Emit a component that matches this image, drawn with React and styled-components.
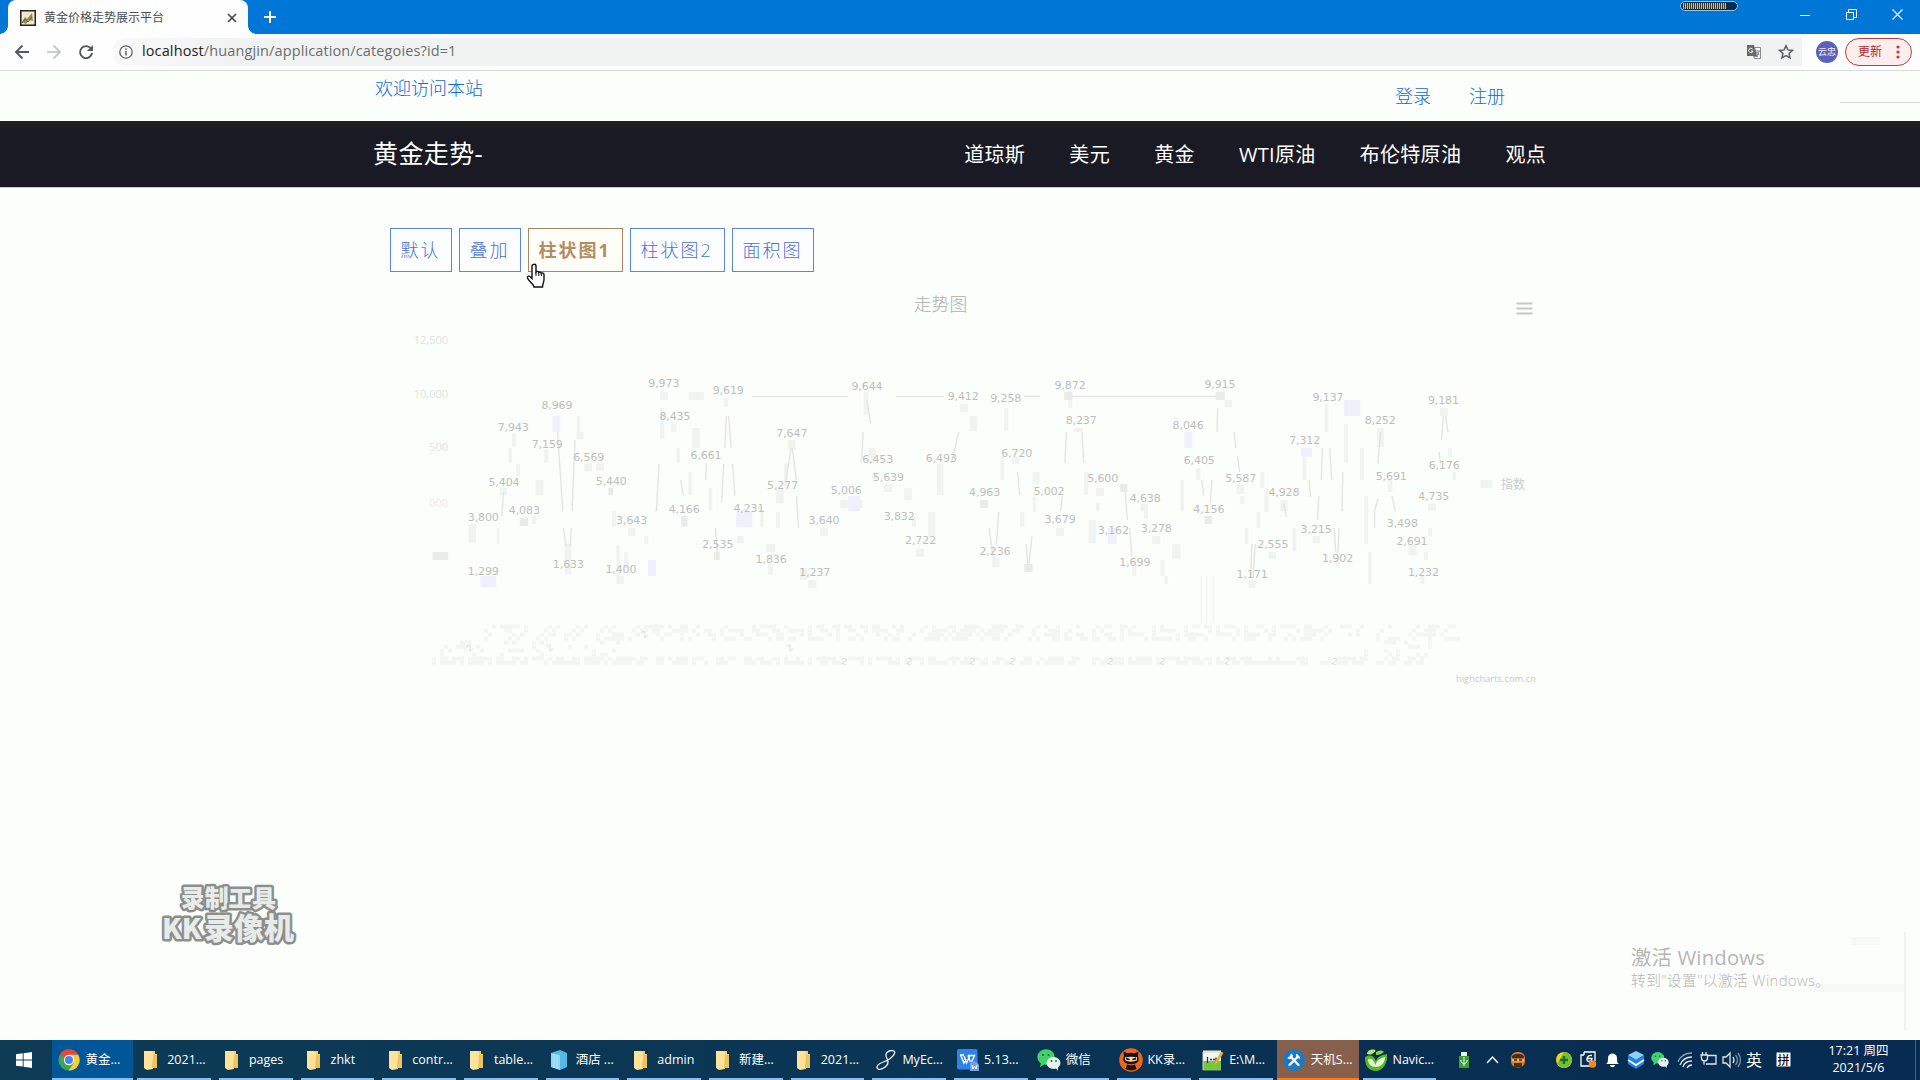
import React from "react";
import styled, { createGlobalStyle } from "styled-components";

const CJK = '"Noto Sans CJK SC"';

const GlobalStyle = createGlobalStyle`
  * { box-sizing: border-box; }
  body { margin: 0; background: #fcfefb; overflow: hidden; }
`;

const Screen = styled.div`
  width: 1920px;
  height: 1080px;
  position: relative;
  display: flex;
  flex-direction: column;
  background: #fcfefb;
  font-family: "Open Sans", ${CJK}, sans-serif;
  overflow: hidden;
  white-space: nowrap;
  line-height: 1;
  svg { display: block; flex: none; }
`;

/* ---------- browser chrome ---------- */
const TabBar = styled.header`
  height: 34px;
  flex: none;
  display: flex;
  align-items: center;
  background: #0077d7;
  padding-left: 8px;
`;
const Tab = styled.div`
  width: 240px;
  height: 34px;
  padding: 1px 10px 0 12px;
  display: flex;
  align-items: center;
  gap: 8px;
  border-radius: 8px 8px 0 0;
  background: #fdfefd;
  position: relative;
  &::before, &::after {
    content: "";
    position: absolute;
    bottom: 0;
    width: 8px;
    height: 8px;
  }
  &::before { left: -8px; background: radial-gradient(circle at 0 0, transparent 7.5px, #fdfefd 8px); }
  &::after { right: -8px; background: radial-gradient(circle at 100% 0, transparent 7.5px, #fdfefd 8px); }
`;
const TabTitle = styled.span`
  flex: 1;
  font-size: 12px;
  color: #4a4d4e;
`;
const NewTab = styled.div`margin-left: 15px;`;
const Spacer = styled.div`flex: 1;`;
const Meter = styled.div`
  width: 58px;
  height: 10px;
  align-self: flex-start;
  margin: 1px 62px 0 0;
  border: 1px solid #8cc4ea;
  border-radius: 5px;
  background: #062c50;
  padding: 1px 11px 1px 2px;
`;
const MeterFill = styled.div`
  height: 6px;
  background: repeating-linear-gradient(90deg, #d9b960 0 1px, #3d3c2c 1px 2px);
`;
const WindowButtons = styled.div`
  display: flex;
  gap: 35px;
  padding: 0 17px 6px 0;
`;
const Toolbar = styled.div`
  height: 37px;
  flex: none;
  display: flex;
  align-items: center;
  padding: 0 8px 1px 14px;
  border-bottom: 1px solid #d9dbda;
  background: #fdfefd;
`;
const NavIcons = styled.div`
  display: flex;
  gap: 16px;
  margin-right: 18px;
`;
const Omnibox = styled.div`
  flex: 1;
  height: 28px;
  display: flex;
  align-items: center;
  border-radius: 14px 0 0 14px;
  background: linear-gradient(90deg, #f8f9f8, #f1f3f2 120px);
  padding: 0 8px 0 7px;
`;
const Url = styled.span`
  flex: 1;
  margin-left: 9px;
  font-size: 14.5px;
  letter-spacing: 0.12px;
  color: #6a6e70;
  b { font-weight: 400; color: #222426; }
`;
const Avatar = styled.div`
  width: 22px;
  height: 22px;
  margin: 0 7px 0 14px;
  border-radius: 50%;
  background: #5c62bb;
  color: #eef0ff;
  font-size: 9px;
  display: flex;
  align-items: center;
  justify-content: center;
`;
const UpdatePill = styled.div`
  width: 67px;
  height: 28px;
  border: 1px solid #c23a3c;
  border-radius: 14px;
  background: #fbeeed;
  color: #b3262b;
  font-size: 12px;
  display: flex;
  align-items: center;
  justify-content: space-between;
  padding: 0 11px 0 12px;
`;

/* ---------- site ---------- */
const Page = styled.main`
  flex: 1;
  min-height: 0;
  display: flex;
  flex-direction: column;
`;
const TopLinks = styled.div`
  height: 50px;
  flex: none;
  display: flex;
  justify-content: space-between;
  padding: 8px 415px 0 375px;
  color: #0f6bd8;
  font-size: 18px;
  font-weight: 300;
  position: relative;
  &::after {
    content: "";
    position: absolute;
    left: 1840px;
    right: 0;
    top: 31px;
    height: 1px;
    background: #d8dad9;
  }
`;
const Account = styled.div`
  display: flex;
  gap: 38px;
  padding-top: 8px;
`;
const SiteNav = styled.nav`
  height: 67px;
  flex: none;
  display: flex;
  align-items: center;
  justify-content: space-between;
  padding: 0 374px 0 373px;
  background: linear-gradient(180deg, #1f1f1f 0 7px, #191a24 7px 55px, #1d1822 66px);
  border-bottom: 1px solid #cfcdd2;
  color: #fff;
`;
const Brand = styled.div`
  font-size: 25px;
  letter-spacing: 0.4px;
  padding-bottom: 2px;
`;
const Menu = styled.div`
  display: flex;
  gap: 44.2px;
  font-size: 20px;
  letter-spacing: 0.3px;
  padding-top: 2px;
`;
const Content = styled.section`
  padding: 40px 0 0 390px;
`;
const ButtonRow = styled.div`
  display: flex;
  gap: 7px;
`;
const ChartButton = styled.button`
  height: 44px;
  width: ${(p) => p.$w}px;
  padding: 0 0 2px 9.5px;
  text-align: left;
  border: 1px solid ${(p) => (p.$hot ? "#a88567" : "#5c84e6")};
  background: ${(p) => (p.$hot ? "#fffdf8" : "#fbfdfe")};
  color: ${(p) => (p.$hot ? "#b28d62" : "#4a70d8")};
  font: ${(p) => (p.$hot ? 700 : 300)} 18px "Open Sans", ${CJK}, sans-serif;
  letter-spacing: 2px;
`;
const ChartBox = styled.div`
  margin: 18px 0 0 10px;
`;

/* ---------- overlays ---------- */
const Cursor = styled.div`
  position: absolute;
  left: 526px;
  top: 263px;
`;
const RecorderMark = styled.div`
  position: absolute;
  left: 150px;
  top: 862px;
`;
const Activation = styled.div`
  position: absolute;
  left: 1631px;
  top: 946px;
  color: #b4b6b4;
  font-weight: 300;
  h4 { margin: 0 0 4px; font-size: 20.3px; line-height: 22px; font-weight: 400; letter-spacing: 0.2px; }
  p { margin: 0; font-size: 14.8px; line-height: 16px; letter-spacing: 0.35px; }
`;
const Ghost = styled.div`
  position: absolute;
  left: 1808px;
  top: 932px;
  width: 98px;
  height: 98px;
  border-right: 2px solid #f0f2ef;
  background: linear-gradient(#f7f9f6, #f7f9f6) 44px 5px / 28px 8px no-repeat,
    linear-gradient(#f7f9f6, #f7f9f6) 0 52px / 98px 8px no-repeat;
`;

/* ---------- taskbar ---------- */
const Taskbar = styled.footer`
  height: 40px;
  flex: none;
  display: flex;
  background: linear-gradient(90deg, #0d3b54, #0a3554 45%, #062a50);
  color: #fff;
  font-size: 12.5px;
`;
const Start = styled.div`
  width: 51.5px;
  padding: 12px 0 0 16px;
`;
const Task = styled.div`
  width: 81.7px;
  height: 40px;
  flex: none;
  position: relative;
  display: flex;
  align-items: center;
  gap: 5.5px;
  padding-left: 6.5px;
  background: ${(p) => p.$bg || "transparent"};
  &::after {
    content: "";
    position: absolute;
    bottom: 0;
    height: 2px;
    left: ${(p) => (p.$bg ? 0 : 4)}px;
    right: ${(p) => (p.$bg ? 0 : 4)}px;
    background: ${(p) => p.$line || "#86bfef"};
  }
`;
const TaskIcon = styled.span`
  width: 22px;
  display: flex;
  justify-content: center;
`;
const Tray = styled.div`
  flex: 1;
  position: relative;
  > svg { position: absolute; right: 0; top: 0; }
`;

/* ---------- icons ---------- */
const I = ({ w = 16, h = w, vb, children, ...p }) => (
  <svg width={w} height={h} viewBox={vb || `0 0 ${w} ${h}`} fill="none" {...p}>{children}</svg>
);

const Folder = () => (
  <I w={14} h={20}>
    <path d="M0 1h11v3h2v14H0z" fill="#f5cf68" />
    <path d="M0 1h8l1 2v16l-6 1-3-2z" fill="#ffe39a" />
    <path d="M9 5h4v13H8z" fill="#eec35c" />
  </I>
);
const Chrome = () => (
  <I w={22} vb="0 0 24 24">
    <circle cx="12" cy="12" r="11.5" fill="#3fa551" />
    <path d="M12 12 2 6.2A11.5 11.5 0 0 1 22 6.2z" fill="#e3493b" />
    <path d="M22 6.2H12l5.2 9L11.6 23.5A11.5 11.5 0 0 0 22 6.2z" fill="#f9cd3a" />
    <circle cx="12" cy="12" r="5.6" fill="#fff" />
    <circle cx="12" cy="12" r="4.4" fill="#4a86e8" />
  </I>
);
const Crate = () => (
  <I w={18} h={20}>
    <path d="m1 3 9-3 7 3v14l-7 3-9-3z" fill="#58b8e4" />
    <path d="m1 3 9 2v15l-9-3z" fill="#8fd8f5" />
    <path d="M4 4v14M7 5v14" stroke="#c7effc" strokeWidth=".7" />
  </I>
);
const Eclipse = () => (
  <I w={22} h={22}>
    <path d="M19.500 4.500C21 1 15 .5 12 3.500c-3 3.200.5 5.500 1 9 .4 4-5 8.300-9 7.800-3.300-.5-2.300-4 1-5.800C8.500 12.500 17 11 19.500 4.500z" stroke="#e8f1f5" strokeWidth="1.300" />
  </I>
);
const Wps = () => (
  <I w={22}>
    <rect width="20.500" height="20.500" rx="2" fill="#2f82ea" />
    <path d="M3 6h4m0 1 2.500 7L13 6.500m-2 0h6.500l-3.500 8-3-8M3.800 6.500 7 14l2-4" stroke="#fff" strokeWidth="1.400" />
    <path d="M13 12.500h6l3 3V22h-9z" fill="#6f9fe8" />
    <path d="m15 16 1 4 1.500-3 1.500 3 1-4" stroke="#fff" />
  </I>
);
const WeChat = ({ w = 24 }) => (
  <I w={w} vb="0 0 24 24">
    <ellipse cx="9" cy="9" rx="8.700" ry="7.700" fill="#43d16c" />
    <path d="m4 14-1 5 5-3z" fill="#43d16c" />
    <ellipse cx="16.500" cy="15" rx="7" ry="6" fill="#e7f2ee" />
    <path d="m18 19 3 4v-5z" fill="#e7f2ee" />
    <g fill="#15633b"><circle cx="6" cy="7" r="1" /><circle cx="11.500" cy="7" r="1" /><circle cx="14.500" cy="13" r=".9" /><circle cx="19" cy="13" r=".9" /></g>
  </I>
);
const Ninja = ({ w = 24 }) => (
  <I w={w} vb="0 0 24 24">
    <circle cx="12" cy="12" r="11.800" fill="#f0641c" />
    <path d="m4.500 3.500 4 1.700c2-.7 5-.7 7 0l4-1.700-.5 5c1 2 1 4-.3 5.500-3 3-10.400 3-13.400 0C4 12.500 4 10.500 5 8.500z" fill="#171313" />
    <path d="M6 9.300c4-.8 8-.8 12 0v3c-3 1.800-9 1.800-12 0z" fill="#f3d3ae" />
    <path d="m7 9.500 4 1.500-1 1.300-3-.8zm10 0L13 11l1 1.300 3-.8z" fill="#111" />
    <path d="m8 16.500 4 1 4-1 1.500 4.500c-3 1.800-8 1.800-11 0z" fill="#171313" />
  </I>
);
const Notepad = () => (
  <I w={22}>
    <path d="M1 1.500h18V21H1z" fill="#f4f6f1" />
    <path d="M1 12h18v9.500H1z" fill="#79c542" />
    <path d="M1 21V3h17" stroke="#cfd5c6" />
    <path d="M2 1.500h16" stroke="#7c8078" strokeDasharray="1.500 1" />
    <path d="M5.500 8v6m2.500-3.500h2m1 0h2m1-2v4" stroke="#333" strokeWidth="1.300" />
    <path d="M19 2.500 13.500 12l-1 4 3-2.500L21.500 4z" fill="#e4b239" />
  </I>
);
const Wrench = () => (
  <I w={22}>
    <circle cx="11" cy="11" r="10.800" fill="#1d79c4" />
    <path d="m7.500 7.500 8 8.500M15 7.500 6.500 16" stroke="#fff" strokeWidth="2.300" strokeLinecap="round" />
    <path d="M5 8.500q3 2 4-1.500L8 5M14 5q-1 4 3 3.500" stroke="#fff" strokeWidth="1.800" />
  </I>
);
const Navicat = () => (
  <I w={24} h={22}>
    <path d="M1 9c0-2 4-3 7-2 2 .5 3 3 4 5 2-5 6-6 11-7 1 9-4 17-11 17S1 17 1 9z" fill="#55b52d" />
    <path d="M4 10c4-1 6 2 7.500 6C13 11 16 9 21 8c0 6-4 10-9 10s-8-3-8-8z" fill="#e8f8d2" />
    <path d="M3 5c0-3 3-5 7-4.500 2 .5 2 2 0 3-2 1.500-3 3-7 1.500z" fill="#b6e668" />
    <path d="M12 3c3-2 6-2 8 0-2 2-5 3-8 3z" fill="#8bd23f" />
  </I>
);

const TASKS = [
  ["黄金...", Chrome, "#005697"],
  ["2021...", Folder], ["pages", Folder], ["zhkt", Folder], ["contr...", Folder],
  ["table...", Folder], ["酒店 ...", Crate], ["admin", Folder], ["新建...", Folder],
  ["2021...", Folder], ["MyEc...", Eclipse], ["5.13...", Wps], ["微信", WeChat],
  ["KK录...", Ninja], ["E:\\M...", Notepad], ["天机S...", Wrench, "#87604c", "#ff7a17"],
  ["Navic...", Navicat],
];

/* ---------- chart ---------- */
const SX = 0.37;
const SY = 1 / 3;
const HALF = 1568;

const LABELS = [
  ["1,299", 225, 843], ["3,800", 225, 681], ["5,404", 281, 575], ["7,943", 306, 411], ["4,083", 336, 660],
  ["7,159", 398, 462], ["8,969", 424, 345], ["1,633", 455, 822], ["6,569", 510, 501], ["5,440", 571, 573],
  ["1,400", 597, 836], ["3,643", 626, 690], ["9,973", 713, 280], ["8,435", 743, 379], ["4,166", 768, 657],
  ["6,661", 827, 496], ["2,535", 859, 763], ["9,619", 887, 300], ["4,231", 943, 653], ["1,836", 1003, 807],
  ["5,277", 1034, 585], ["7,647", 1059, 429], ["1,237", 1121, 847], ["3,640", 1146, 690], ["5,006", 1206, 600],
  ["9,644", 1262, 287], ["6,453", 1291, 508], ["5,639", 1320, 561], ["3,832", 1349, 679], ["2,722", 1407, 750],
  ["6,493", 1463, 504], ["9,412", 1522, 317], ["4,963", 1580, 605],
  ["2,236", HALF + 40, 783], ["9,258", HALF + 69, 323], ["6,720", HALF + 99, 489], ["5,002", HALF + 186, 604],
  ["3,679", HALF + 216, 688], ["9,872", HALF + 243, 285], ["8,237", HALF + 273, 390], ["5,600", HALF + 331, 563],
  ["3,162", HALF + 360, 720], ["1,699", HALF + 418, 815], ["4,638", HALF + 446, 625], ["3,278", HALF + 476, 714],
  ["8,046", HALF + 562, 405], ["6,405", HALF + 592, 511], ["4,156", HALF + 618, 657], ["9,915", HALF + 648, 283],
  ["5,587", HALF + 704, 563], ["1,171", HALF + 735, 852], ["2,555", HALF + 791, 763], ["4,928", HALF + 821, 605],
  ["7,312", HALF + 877, 450], ["3,215", HALF + 908, 717], ["9,137", HALF + 940, 320], ["1,902", HALF + 966, 803],
  ["8,252", HALF + 1081, 390], ["5,691", HALF + 1111, 558], ["3,498", HALF + 1141, 699], ["2,691", HALF + 1167, 752],
  ["1,232", HALF + 1198, 846], ["4,735", HALF + 1226, 619], ["9,181", HALF + 1252, 331], ["6,176", HALF + 1254, 525],
];

/* marker remnants: x, y, width, height, shade */
const BLOCKS = [
  [217, 858, 43, 34, "b"], [270, 592, 20, 24], [303, 428, 10, 44], [324, 684, 22, 24, "d"], [390, 476, 11, 42],
  [412, 378, 21, 48, "b"], [477, 378, 10, 70], [487, 426, 9, 22], [445, 762, 18, 90], [498, 520, 21, 24],
  [530, 520, 21, 24], [563, 594, 13, 22, "d"], [585, 858, 20, 24], [616, 714, 20, 24], [703, 306, 21, 24],
  [780, 306, 41, 24], [703, 354, 11, 94], [733, 402, 14, 24], [747, 474, 10, 46], [790, 414, 20, 60],
  [670, 810, 22, 48, "b"], [760, 678, 17, 32, "d"], [780, 546, 9, 70], [834, 594, 10, 68], [849, 786, 15, 24, "d"],
  [876, 324, 10, 28], [908, 666, 44, 46, "b"], [930, 678, 18, 24], [974, 660, 9, 52], [995, 822, 13, 32],
  [1016, 592, 21, 48], [1016, 666, 11, 48], [1038, 520, 10, 74], [1048, 450, 21, 30], [1081, 834, 20, 35],
  [1103, 870, 22, 24], [1135, 714, 22, 24], [1190, 630, 60, 24], [1211, 618, 33, 46, "b"], [1253, 306, 13, 70],
  [1266, 474, 20, 46], [1276, 546, 12, 22], [1308, 582, 22, 24], [1363, 594, 21, 36], [1395, 776, 21, 24],
  [1384, 680, 10, 32], [1427, 666, 20, 72], [1451, 522, 18, 94], [1514, 342, 21, 24], [1540, 378, 20, 46],
  [573, 664, 10, 48], [585, 764, 9, 95], [606, 786, 10, 48], [660, 738, 11, 24], [261, 714, 8, 48],
  [185, 702, 20, 58], [293, 474, 10, 46], [314, 522, 10, 36], [366, 570, 22, 46], [357, 678, 11, 24],
  [88, 786, 42, 24, "d"], [911, 738, 18, 22], [990, 762, 24, 24],
  [HALF + 0, 630, 21, 24, "d"], [HALF + 32, 800, 20, 32], [HALF + 65, 354, 11, 70], [HALF + 55, 500, 10, 70],
  [HALF + 86, 500, 20, 22], [HALF + 142, 546, 19, 36], [HALF + 108, 666, 11, 46], [HALF + 119, 822, 22, 24, "d"],
  [HALF + 142, 620, 9, 46], [HALF + 205, 714, 22, 24], [HALF + 227, 306, 22, 24, "d"], [HALF + 238, 330, 11, 24],
  [HALF + 255, 414, 22, 12], [HALF + 313, 594, 22, 24], [HALF + 281, 546, 10, 70], [HALF + 313, 640, 10, 25],
  [HALF + 378, 582, 20, 24, "d"], [HALF + 293, 690, 20, 70], [HALF + 345, 714, 24, 48, "b"], [HALF + 411, 810, 11, 48],
  [HALF + 433, 642, 21, 22], [HALF + 443, 664, 11, 24], [HALF + 465, 738, 22, 24], [HALF + 498, 858, 10, 24],
  [HALF + 487, 810, 10, 48], [HALF + 519, 762, 22, 46], [HALF + 541, 570, 10, 95], [HALF + 552, 426, 21, 48, "b"],
  [HALF + 584, 534, 11, 36], [HALF + 606, 678, 21, 24, "d"], [HALF + 637, 306, 24, 24, "d"], [HALF + 661, 330, 20, 22],
  [HALF + 692, 582, 22, 30], [HALF + 703, 618, 11, 24], [HALF + 715, 714, 10, 48], [HALF + 725, 870, 20, 24],
  [HALF + 757, 546, 11, 48], [HALF + 768, 594, 11, 72], [HALF + 747, 666, 10, 48], [HALF + 779, 786, 20, 22],
  [HALF + 811, 630, 20, 34], [HALF + 844, 714, 11, 70], [HALF + 867, 474, 30, 26, "b"], [HALF + 871, 500, 11, 70],
  [HALF + 898, 738, 20, 22], [HALF + 931, 342, 10, 84], [HALF + 984, 330, 43, 48, "b"], [HALF + 984, 402, 10, 118],
  [HALF + 962, 786, 10, 46], [HALF + 1027, 474, 10, 96], [HALF + 1038, 618, 10, 144], [HALF + 1048, 786, 10, 96],
  [HALF + 1073, 414, 18, 58], [HALF + 1102, 570, 12, 36], [HALF + 1157, 762, 22, 34], [HALF + 1200, 786, 10, 24],
  [HALF + 1190, 858, 10, 24], [HALF + 1211, 640, 21, 24], [HALF + 1211, 714, 10, 24], [HALF + 1243, 354, 21, 24],
  [HALF + 1277, 546, 9, 24], [HALF + 1265, 474, 10, 28], [HALF + 1352, 570, 32, 24],
];

const LINES = [
  [426, 426, 440, 664], [473, 450, 465, 664], [442, 714, 449, 770], [463, 714, 460, 770], [700, 522, 693, 664],
  [759, 570, 766, 616], [882, 378, 878, 474], [888, 378, 895, 474], [875, 522, 869, 640], [899, 522, 905, 616],
  [853, 714, 857, 786], [1057, 474, 1043, 570], [1060, 474, 1071, 570], [1072, 618, 1077, 714], [1252, 426, 1247, 520],
  [1262, 330, 1272, 400], [1510, 426, 1500, 474], [1500, 474, 1490, 520], [280, 606, 275, 678], [828, 520, 826, 570],
  [952, 320, 1211, 320], [1340, 320, 1470, 320], [HALF + 119, 319, HALF + 162, 319], [HALF + 248, 319, HALF + 638, 319],
  [HALF + 24, 714, HALF + 35, 800], [HALF + 50, 666, HALF + 44, 762], [HALF + 101, 546, HALF + 107, 616],
  [HALF + 124, 762, HALF + 129, 822], [HALF + 140, 738, HALF + 132, 820], [HALF + 233, 426, HALF + 229, 520],
  [HALF + 275, 426, HALF + 280, 520], [HALF + 222, 618, HALF + 217, 664], [HALF + 392, 606, HALF + 398, 690],
  [HALF + 404, 714, HALF + 410, 800], [HALF + 642, 354, HALF + 640, 426], [HALF + 686, 426, HALF + 691, 474],
  [HALF + 696, 500, HALF + 701, 546], [HALF + 599, 570, HALF + 604, 616], [HALF + 626, 570, HALF + 622, 640],
  [HALF + 735, 762, HALF + 730, 864], [HALF + 743, 762, HALF + 738, 864], [HALF + 925, 474, HALF + 922, 570],
  [HALF + 945, 474, HALF + 950, 570], [HALF + 889, 570, HALF + 893, 620], [HALF + 915, 618, HALF + 912, 690],
  [HALF + 980, 546, HALF + 978, 664], [HALF + 957, 714, HALF + 961, 786], [HALF + 970, 714, HALF + 967, 786],
  [HALF + 1082, 426, HALF + 1075, 520], [HALF + 1075, 626, HALF + 1066, 664], [HALF + 1113, 618, HALF + 1122, 664],
  [HALF + 1252, 378, HALF + 1247, 450], [HALF + 1258, 378, HALF + 1264, 426], [HALF + 1240, 486, HALF + 1244, 520],
  [HALF + 820, 640, HALF + 828, 680], [HALF + 1066, 664, HALF + 1066, 712],
];

const FAINT_COLUMNS = [598, 612, 630];

const SHADES = { b: "#f0f0fc", d: "#e9ebe9" };

const speckles = [];
for (let r = 0; r < 11; r++) {
  for (let c = 0; c < 258; c++) {
    const n = (c * 37 + r * 91 + ((c * c * 7 + r * c * 13) % 101)) % 100;
    const upper = r < 4 && c > 12;
    const lower = (r === 8 || r === 9) && c < 248;
    const middle = r >= 4 && r < 8 && (c < 48 || (c > 232 && c < 250)) && c % 17 < 13;
    const limit = lower ? 62 : upper ? 42 : middle ? 24 : 0;
    if (n < limit) speckles.push([32 + c * 4, 334.5 + r * 4]);
  }
}

const Chart = () => (
  <svg width="1160" height="400">
    <text x="540.5" y="20.5" textAnchor="middle" fontSize="17.8" fontWeight="300" fill="#acaeac">走势图</text>
    {speckles.map(([x, y], i) => <rect key={i} x={x} y={y} width="4" height="4" fill="#f4f6f3" />)}
    {BLOCKS.map(([x, y, w, h, s], i) => (
      <rect key={i} x={x * SX} y={y * SY} width={w * SX} height={h * SY} fill={SHADES[s] || "#f1f3f0"} />
    ))}
    {LINES.map(([a, b, c, d], i) => (
      <line key={i} x1={a * SX} y1={b * SY} x2={c * SX} y2={d * SY} stroke="#e3e5e2" strokeWidth="1.4" />
    ))}
    {FAINT_COLUMNS.map((x) => (
      <line key={x} x1={(HALF + x) * SX} x2={(HALF + x) * SX} y1="286" y2="333" stroke="#f2f4f1" strokeWidth="1.4" />
    ))}
    <g fontFamily='"DejaVu Sans", sans-serif' fontSize="11" textAnchor="middle" fill="#bcbebb" letterSpacing="-.1">
      {LABELS.map(([t, x, y]) => <text key={t} x={x * SX} y={y * SY + 4}>{t}</text>)}
    </g>
    <g fontFamily='"Open Sans", sans-serif' fontSize="11" textAnchor="end" fill="#e0e2df">
      <text x="48" y="54">12,500</text>
      <text x="48" y="108">10,000</text>
      <text x="48" y="161">500</text>
      <text x="48" y="217" fill="#e9ebe8">000</text>
    </g>
    <g fontFamily='"Open Sans", sans-serif' fontSize="9" fill="#d6d8d5">
      {[68, 148, 252, 388].map((x) => <text key={x} x={x} y={x === 252 ? 346 : 362} transform={`rotate(-35 ${x} 360)`}>2</text>)}
      {[442, 507, 570, 610, 708, 760, 825, 932].map((x) => <text key={x} x={x} y="374" transform={`rotate(15 ${x} 370)`}>2</text>)}
    </g>
    <text x="1101" y="198.500" fontSize="12" fill="#cbcdca">指数</text>
    <path d="M1116.500 13.500h16M1116.500 18.500h16M1116.500 23.500h16" stroke="#c6c8c5" strokeWidth="2.200" />
    <text x="1136" y="392" textAnchor="end" fontFamily='"Open Sans", sans-serif' fontSize="9.400" fill="#c9cbc8">highcharts.com.cn</text>
  </svg>
);

const TrayIcons = () => (
  <svg width="482" height="40" viewBox="1438 0 482 40" fill="none" fontFamily={`"Open Sans", ${CJK}, sans-serif`}>
    <path d="M1461 12h6v4h-6z" fill="#eef5ee" />
    <path d="M1459 16h10v12h-10z" fill="#3f9c3a" />
    <path d="M1464 17v9m-3-6v2l3 2 3-2v-2" stroke="#e9ffe6" />
    <path d="m1487 23 5.500-6 5.500 6" stroke="#fff" strokeWidth="1.500" />
    <rect x="1511" y="12" width="14" height="15.500" rx="6" fill="#e07c22" />
    <path d="M1512 16c3-3 9-3 12 0v4h-12zM1514 23h8v4h-8z" fill="#4a2c18" />
    <path d="M1512 18.500h12v3h-12z" fill="#f2b568" />
    <path d="M1514 20h3m2 0h3" stroke="#3a2212" strokeWidth="1.300" />
    <circle cx="1564" cy="20" r="8" fill="#f3d21d" />
    <path d="M1564 12a8 8 0 0 1 0 16 9 9 0 0 1-7-4z" fill="#78bd33" />
    <path d="M1564 16v8m-4-4h8" stroke="#15712b" strokeWidth="2.400" />
    <path d="M1584 15h-3v11h9M1584 12h11v9M1584 12v3M1592 15.500c-5-1-7 6-3 6 2 0 3-2 3-3h-5" stroke="#fff" strokeWidth="1.300" />
    <circle cx="1592.500" cy="24" r="3.800" fill="#f08a22" />
    <path d="M1606 24c2-1 2-3 2-6 0-6 9-6 9 0 0 3 0 5 2 6zM1610 25h5c0 3-5 3-5 0z" fill="#fff" />
    <path d="m1636 11 8 4-8 5-8-5z" fill="#8bd0fa" />
    <path d="m1628 15 8 5 8-5v9l-8 5-8-5z" fill="#2480e2" />
    <path d="m1628 20 8 5 8-5" stroke="#e8f5ff" strokeWidth="2" />
    <svg x="1651" y="11" width="18" height="18"><WeChat w={18} /></svg>
    <g stroke="#dfe7ee" strokeWidth="1.300">
      <path d="M1678 22c2-5 7-9 14-9" opacity=".6" />
      <path d="M1680 25c2-5 6-8 12-8M1683 27c1-4 5-6 9-6M1687 28c1-2 3-3 5-3" />
      <path d="M1708 15.500h8v8.500h-10M1702.500 12v3m3.500-3v3m-5 0h6.500v3q0 3-3 3t-3-3zm3 6v3.500" />
      <path d="M1723 17h3l4-4v14l-4-4h-3zM1733 17q2 3 0 6" />
      <path d="M1735.500 15q4 5 0 10M1738 13q5 7 0 14" opacity=".55" />
    </g>
    <text x="1746" y="25.500" fontSize="16" fill="#fff">英</text>
    <path d="M1776.500 12.500h14v14h-14z" fill="#fff" />
    <text x="1777.500" y="24.500" fontSize="12" fontWeight="500" fill="#111">拼</text>
    <g fill="#fff" fontSize="12.500" textAnchor="middle">
      <text x="1858.500" y="15">17:21 周四</text>
      <text x="1858.500" y="32">2021/5/6</text>
    </g>
    <path d="M1915.500 0v40" stroke="#42607c" />
  </svg>
);

export default function App() {
  return (
    <Screen>
      <GlobalStyle />
      <TabBar>
        <Tab>
          <I w={16}>
            <rect x=".75" y=".75" width="14.500" height="14.500" fill="#efe8cf" stroke="#222" strokeWidth="1.500" />
            <path d="m2 12 3-5 2 2 5-6 1 8-4-1-3 4z" fill="#9a8850" />
            <path d="m2 13 3-4 3 3 4-5" stroke="#5a6a48" />
          </I>
          <TabTitle>黄金价格走势展示平台</TabTitle>
          <I w={12}><path d="m2 2 8 8M10 2l-8 8" stroke="#44484a" strokeWidth="1.700" /></I>
        </Tab>
        <NewTab><I w={14}><path d="M7 1v12M1 7h12" stroke="#fff" strokeWidth="2" /></I></NewTab>
        <Spacer />
        <Meter><MeterFill /></Meter>
        <WindowButtons>
          <I w={11}><path d="M0 6.500h10" stroke="#fff" /></I>
          <I w={11}><path d="M.5 3.500h7v7h-7zM2.500 3.500v-3h8v8h-3" stroke="#fff" /></I>
          <I w={11}><path d="m.5.5 10 10M10.500.5l-10 10" stroke="#fff" strokeWidth="1.100" /></I>
        </WindowButtons>
      </TabBar>
      <Toolbar>
        <NavIcons>
          <I w={16}><path d="M15 8H2m6.500-6.500L2 8l6.500 6.500" stroke="#54585a" strokeWidth="1.900" /></I>
          <I w={16}><path d="M1 8h13M7.500 1.500 14 8l-6.500 6.500" stroke="#bcbfc0" strokeWidth="1.700" /></I>
          <I w={16}><path d="M13.200 5A6 6 0 1 0 14 9" stroke="#54585a" strokeWidth="1.900" /><path d="M15 1v6H9z" fill="#54585a" /></I>
        </NavIcons>
        <Omnibox>
          <I w={14}><circle cx="7" cy="7" r="6.200" stroke="#5f6365" strokeWidth="1.300" /><path d="M7 6v4.500M7 3.300v1.500" stroke="#5f6365" strokeWidth="1.500" /></I>
          <Url><b>localhost</b>/huangjin/application/categoies?id=1</Url>
          <I w={16} style={{ marginRight: 16 }}>
            <path d="M1 1h7l3 11H1z" fill="#65696b" />
            <path d="M8.500 3.500h6v11h-6l-1-2h4z" stroke="#85898b" fill="#f6f7f7" />
            <path d="M10 7h4m-3 4c1-1 2-2 2-4m-2 1 2 3" stroke="#85898b" />
            <path d="M6.500 5a2.200 2.200 0 1 0 .5 2H5" stroke="#fff" />
          </I>
          <I w={16}><path d="m8 1.800 1.900 4.100 4.500.5-3.300 3 .9 4.400L8 11.600l-4 2.200.9-4.400-3.300-3 4.500-.5z" stroke="#5c6062" strokeWidth="1.500" /></I>
        </Omnibox>
        <Avatar>云忠</Avatar>
        <UpdatePill>
          更新
          <I w={4} h={14}><circle cx="2" cy="2" r="1.600" fill="#c5373a" /><circle cx="2" cy="7" r="1.600" fill="#c5373a" /><circle cx="2" cy="12" r="1.600" fill="#c5373a" /></I>
        </UpdatePill>
      </Toolbar>
      <Page>
        <TopLinks>
          <span>欢迎访问本站</span>
          <Account><span>登录</span><span>注册</span></Account>
        </TopLinks>
        <SiteNav>
          <Brand>黄金走势-</Brand>
          <Menu>
            {["道琼斯", "美元", "黄金", "WTI原油", "布伦特原油", "观点"].map((t) => <span key={t}>{t}</span>)}
          </Menu>
        </SiteNav>
        <Content>
          <ButtonRow>
            <ChartButton $w={62}>默认</ChartButton>
            <ChartButton $w={62}>叠加</ChartButton>
            <ChartButton $w={95} $hot>柱状图1</ChartButton>
            <ChartButton $w={95}>柱状图2</ChartButton>
            <ChartButton $w={82}>面积图</ChartButton>
          </ButtonRow>
          <ChartBox><Chart /></ChartBox>
        </Content>
      </Page>
      <Taskbar>
        <Start>
          <I w={16}><path d="M0 2.300 6.700 1.300v6.200H0zM7.600 1.200 16 0v7.500H7.600zM0 8.400h6.700v6.200L0 13.700zM7.600 8.400H16V16l-8.400-1.200z" fill="#fff" /></I>
        </Start>
        {TASKS.map(([label, Icon, bg, line], i) => (
          <Task key={i} $bg={bg} $line={line}>
            <TaskIcon><Icon /></TaskIcon>
            {label}
          </Task>
        ))}
        <Tray><TrayIcons /></Tray>
      </Taskbar>
      <Cursor>
        <I w={20} h={26}>
          <path d="M7.500 1.500c1.500-.8 2.500 0 2.500 1.500v6c.7-1 2.500-.7 2.700.5.700-.8 2.200-.5 2.500.8 1-.7 2.800-.2 2.800 1.200v5c0 3-1.500 4-1.500 7.500H8c0-3-5.500-5.500-6.500-9-.5-2 1.500-2.500 3-1l1.500 1.500V3c0-.7.500-1.200 1.500-1.500z" fill="#fff" stroke="#111" strokeWidth="1.400" />
          <path d="M10 9v4m2.800-3v3m2.600-2.300V13" stroke="#111" />
        </I>
      </Cursor>
      <RecorderMark>
        <svg width="160" height="110" fontFamily={`${CJK}, sans-serif`} fontWeight="900" fill="#e9ebe9" stroke="#8c908d" strokeWidth="5" strokeLinejoin="round" paintOrder="stroke">
          <text x="31" y="45" fontSize="24" textLength="95">录制工具</text>
          <text x="12" y="77" fontSize="28">KK</text>
          <text x="54" y="77" fontSize="30" textLength="90">录像机</text>
        </svg>
      </RecorderMark>
      <Ghost />
      <Activation>
        <h4>激活 Windows</h4>
        <p>转到"设置"以激活 Windows。</p>
      </Activation>
    </Screen>
  );
}
